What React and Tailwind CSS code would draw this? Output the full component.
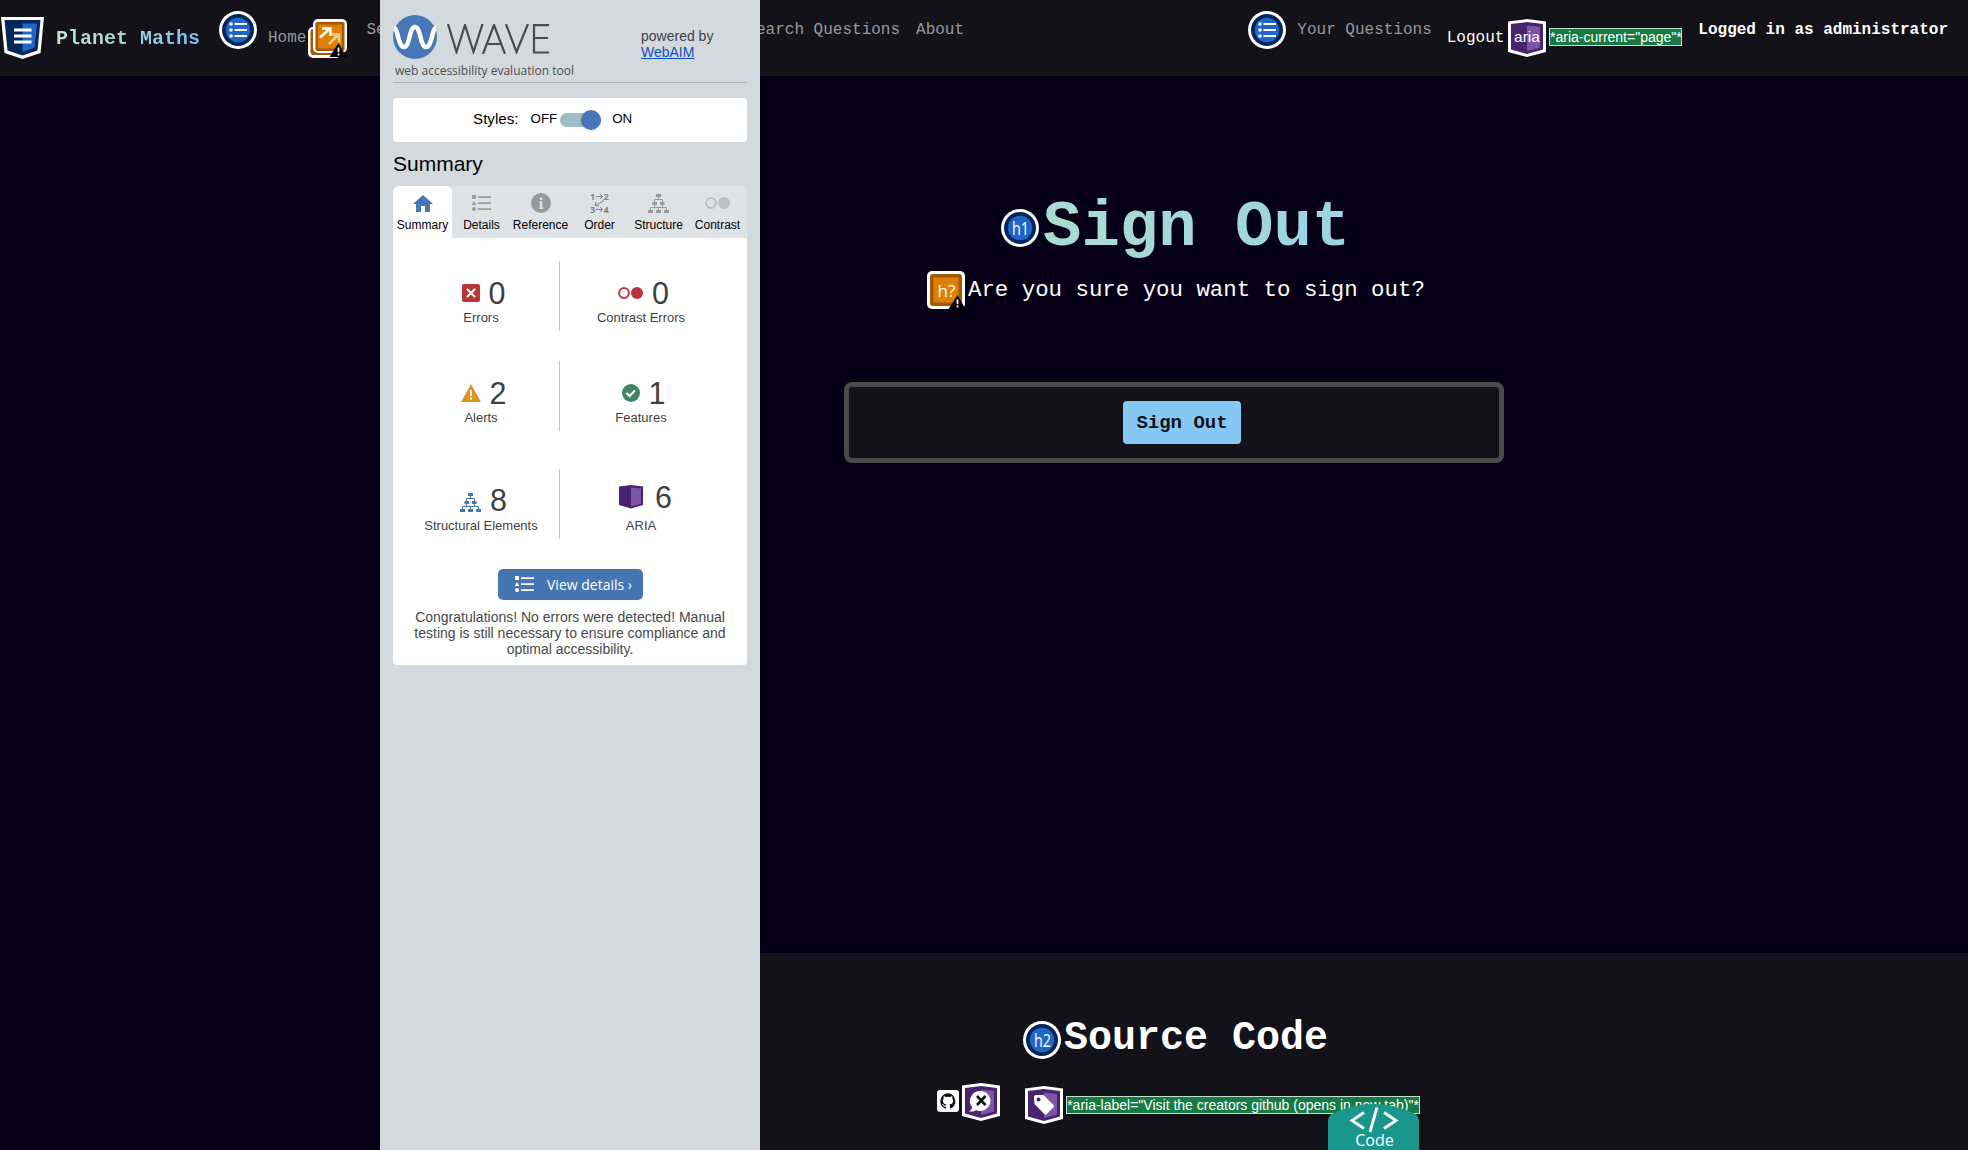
const mono = "font-['Liberation_Mono',monospace]";
const sans = "font-['Liberation_Sans',Arial,sans-serif]";

const Hex = ({ children, className = "" }) => (
  <svg viewBox="0 0 38 38" className={"h-[38px] w-[38px] shrink-0 " + className}>
    <path d="M0 2.500 19 0l19 2.500V33L19 38 0 33z" fill="#fff" />
    <path d="M3 5 19 3l16 2v25.500L19 35 3 30.500z" fill="#472370" />
    <path d="M19 6.500l13 1.500v20.500L19 32z" fill="#7d55a6" />
    {children}
  </svg>
);

const Circle = ({ label }) => (
  <svg viewBox="0 0 38 38" className="h-[38px] w-[38px] shrink-0">
    <circle cx="19" cy="19" r="19" fill="#fff" />
    <circle cx="19" cy="19" r="16" fill="#04275a" />
    <circle cx="19" cy="19" r="12.200" fill="#1f66c8" />
    {label ? (
      <text x="19.500" y="26" textAnchor="middle" fontSize="18" fill="#fff" className="font-['Open_Sans',sans-serif]" textLength="17" lengthAdjust="spacingAndGlyphs">{label}</text>
    ) : (
      <g fill="#fff">
        <circle cx="12" cy="13" r="1.800" /><circle cx="12" cy="19" r="1.800" /><circle cx="12" cy="25" r="1.800" />
        <path d="M15.500 12h12.500v2H15.500zM15.500 18h12.500v2H15.500zM15.500 24h12.500v2H15.500z" />
      </g>
    )}
  </svg>
);

const Warn = () => (
  <g>
    <path d="M30.500 24 38.500 38h-17z" fill="#000" />
    <path d="M29.600 28.500h1.800v4.800h-1.800zM29.600 34.500h1.800v2h-1.800z" fill="#fff" />
  </g>
);

const Tree = ({ color }) => (
  <svg viewBox="0 0 21 19" className="h-[19px] w-[21px]" fill={color}>
    <path d="M8 0h5v3H8zM4.500 8h4.500v3H4.500zM12 8h4.500v3H12zM0 16h5v3H0zM8 16h5v3H8zM16 16h5v3h-5z" />
    <path d="M10.500 3v2.500M6.500 8V5.500h8V8M6.500 11v2.500M14.500 11v2.500M2.500 16v-2.500h16V16M10.500 16v-2.500" stroke={color} fill="none" />
  </svg>
);

const ListIcon = ({ color }) => (
  <svg viewBox="0 0 19 16" className="h-4 w-[19px]" fill={color}>
    <path d="M0 0h4v4H0zM2 6l2.300 4H-.3zM6 1.200h13v1.800H6zM6 7.200h13v1.800H6zM6 13.200h13v1.800H6z" />
    <circle cx="2" cy="14" r="2" />
  </svg>
);

const AriaLabel = ({ children, width, className = "" }) => (
  <span className={`box-border flex h-[18px] items-center justify-center whitespace-nowrap border border-[#c5dfcf] bg-[#177a45] text-white ${sans} ${width} ${className}`}>{children}</span>
);

function Navbar() {
  return (
    <header className={`flex h-[76px] items-start bg-[#121218] text-[16px] leading-5 text-[#98989b] ${mono}`}>
      <svg viewBox="0 0 43 43" className="ml-px mt-[16px] h-[43px] w-[43px] shrink-0">
        <path d="M0 1h43l-3.500 36L21.500 43 3.500 37z" fill="#fff" />
        <path d="M3.500 4h36l-3 30.500-15 5-15-5z" fill="#04275a" />
        <path d="M21.500 7.500H36l-2.500 24L21.500 36z" fill="#1f66c8" />
        <path d="M13 12.500h17.500v3H13zM13 18.500h17.500v3H13zM13 24.500h17.500v3H13z" fill="#fff" />
      </svg>
      <b className="ml-[12px] mt-[27px] w-[145px] shrink-0 whitespace-nowrap bg-gradient-to-r from-[#c3e6c6] to-[#7fb9ee] bg-clip-text text-[20px] leading-6 text-transparent">Planet Maths</b>
      <div className="ml-[18px] mt-[11px]"><Circle /></div>
      <span className="ml-[11px] mt-[28px]">Home</span>
      <svg viewBox="0 0 39 39" className="ml-[2px] mt-[19px] h-[39px] w-[39px] shrink-0">
        <rect x="0" y="8" width="33" height="31" rx="5" fill="#fff" />
        <rect x="2.500" y="10" width="28" height="26" rx="3" fill="#a35a04" />
        <rect x="5" y="0" width="34" height="34" rx="5" fill="#fff" />
        <rect x="7.500" y="3" width="29" height="29" rx="2" fill="#a35a04" />
        <rect x="10" y="5.500" width="24" height="24" fill="#e07f06" />
        <path d="M21 25l9-9M23.500 15.500h7.500v8" stroke="#f6cb92" strokeWidth="2.500" fill="none" />
        <path d="M12 18.500l9-8M14 9.500h8.500V17" stroke="#fff" strokeWidth="2.500" fill="none" />
        <Warn />
      </svg>
      <span className="ml-[19px] mt-5 w-[20px] shrink-0 overflow-hidden whitespace-nowrap">Se</span>
      <span className="ml-[360px] mt-5 shrink-0 whitespace-nowrap">Search Questions</span>
      <span className="ml-[16px] mt-5">About</span>
      <div className="ml-auto mt-[11px]"><Circle /></div>
      <span className="ml-[11px] mt-5 whitespace-nowrap">Your Questions</span>
      <span className="ml-[15px] mt-[28px] text-white">Logout</span>
      <Hex className="ml-[4px] mt-[19px]">
        <text x="19" y="23" textAnchor="middle" fontSize="15" fill="#fff" textLength="26" lengthAdjust="spacingAndGlyphs" className={sans}>aria</text>
      </Hex>
      <AriaLabel width="w-[133px]" className="ml-[3px] mt-[28px] text-[14px]">*aria-current="page"*</AriaLabel>
      <b className="ml-[16px] mr-[20px] mt-5 whitespace-nowrap text-white">Logged in as administrator</b>
    </header>
  );
}

const ContrastIcon = ({ color, className }) => (
  <svg viewBox="0 0 25 12" className={className}>
    <circle cx="6" cy="6" r="4.900" fill="none" stroke={color} strokeWidth="2" />
    <circle cx="19" cy="6" r="6" fill={color} />
  </svg>
);

const tabs = [
  ["Summary", <svg viewBox="0 0 20 17" className="h-[17px] w-5" fill="#4675b4"><path d="M10 0 20 9h-3v8h-5v-6H8v6H3V9H0z" /></svg>],
  ["Details", <ListIcon color="#9a9c9f" />],
  ["Reference", <svg viewBox="0 0 20 20" className="h-5 w-5"><circle cx="10" cy="10" r="10" fill="#97999c" /><path d="M8.900 4.500h2.400v2.400H8.900zM8.200 8.500h3.100v6h1V16H8v-1.500h1V10h-.8z" fill="#e0e4e7" /></svg>],
  ["Order", <svg viewBox="0 0 20 20" className="h-5 w-5 overflow-visible" fill="#818386"><g fontSize="9" fontWeight="bold" className="font-['Noto_Sans',sans-serif]"><text x="0" y="6.500">1</text><text x="13.500" y="6.500">2</text><text x="0" y="20">3</text><text x="13.500" y="20">4</text></g><path d="M5.500 3.500h7M10 1l2.500 2.500L10 6M5.500 16.500h7M10 14l2.500 2.500L10 19M14 7.500 5.500 12.500M6 8.800l-1 3.800 4 .4" stroke="#818386" strokeWidth="1" fill="none" /></svg>],
  ["Structure", <Tree color="#999b9e" />],
  ["Contrast", <ContrastIcon color="#bdc0c3" className="h-3 w-[25px]" />],
];

const Stat = ({ icon, n, label, gap = "gap-[9px]" }) => (
  <div className="flex flex-col items-center text-[#3f3f41]">
    <div className={"flex h-[30px] items-center pl-[5px] " + gap}>{icon}<span className="text-[30.500px] leading-[30px]">{n}</span></div>
    <span className="mt-[2px] whitespace-nowrap text-[13px] leading-4">{label}</span>
  </div>
);

const StatRow = ({ left, right, className = "" }) => (
  <div className={"flex h-[70px] " + className}>
    <div className="flex w-[167px] justify-center border-r border-[#c3c4c6] pl-[10px] pt-[17px]">{left}</div>
    <div className="flex flex-1 justify-center pr-[25px] pt-[17px]">{right}</div>
  </div>
);

function WavePanel() {
  return (
    <aside className={`absolute left-[380px] top-0 flex h-full w-[380px] flex-col bg-[#d4d9dd] px-[13px] ${sans}`}>
      <div className="flex h-[83px] border-b border-[#adb2ba]">
        <div className="w-[248px] pt-[15px]">
          <div className="flex">
            <svg viewBox="0 0 44 44" className="h-[44px] w-[44px]">
              <circle cx="22" cy="22" r="22" fill="#4678b8" />
              <path d="M1 13c4 0 4 19 10 19s5-20 11-20 5 20 11 20 6-19 10-19" fill="none" stroke="#fff" strokeWidth="4.500" />
            </svg>
            <svg viewBox="0 0 103 30" className="ml-[10px] mt-[9px] h-[30px] w-[103px]" fill="none" stroke="#4b4c50" strokeWidth="2.200">
              <path d="M1 0l8.500 28L18 1l8.500 27L35.500 0M36 30 47 1l11 29M40 20h14M59 0l10.500 28L81 0M102 1.200H87V28.500h15M87 14h14" />
            </svg>
          </div>
          <div className="ml-[2px] whitespace-nowrap font-['Open_Sans',sans-serif] text-[12px] leading-[23px] text-[#4d4e52]">web accessibility evaluation tool</div>
        </div>
        <div className="pt-[28px] text-[14px] leading-4 text-[#3f4043]">powered by<br /><a className="text-[#0e51c2] underline">WebAIM</a></div>
      </div>
      <div className="mt-[15px] flex h-[44px] shrink-0 items-center rounded bg-white pl-[80px] text-black">
        <span className="pb-[2px] text-[15.200px]">Styles:</span>
        <span className="ml-[12px] pb-[3px] text-[13.300px]">OFF</span>
        <span className="ml-[3px] flex h-[14px] w-[41px] items-center justify-end rounded-full bg-[#9bbfc3]"><span className="h-5 w-5 rounded-full bg-[#4675b8] shadow" /></span>
        <span className="ml-[11px] pb-[3px] text-[13.300px]">ON</span>
      </div>
      <h2 className="mt-[10px] text-[21px] leading-6 text-black">Summary</h2>
      <div className="mt-[10px] flex h-[52px] shrink-0 overflow-hidden rounded-t-md bg-[#dfe3e6]">
        {tabs.map(([name, icon], i) => (
          <div key={name} className={"flex w-[59px] flex-col items-center " + (i === 0 ? "rounded-tr-md bg-white" : "")}>
            <div className="flex h-[34px] items-center justify-center"><div>{icon}</div></div>
            <span className="-mt-[3px] whitespace-nowrap text-[12px] leading-4 text-black">{name}</span>
          </div>
        ))}
      </div>
      <section className="h-[427px] shrink-0 rounded-b bg-white pt-[23px]">
        <StatRow
          left={<Stat n="0" label="Errors" icon={<svg viewBox="0 0 18 18" className="h-[18px] w-[18px]"><rect width="18" height="18" rx="2" fill="#b7363c" /><path d="M5 5l8 8M13 5l-8 8" stroke="#fff" strokeWidth="2" /></svg>} />}
          right={<Stat n="0" label="Contrast Errors" icon={<ContrastIcon color="#bd3339" className="h-3 w-[25px]" />} />}
        />
        <StatRow className="mt-[30px]"
          left={<Stat n="2" label="Alerts" icon={<svg viewBox="0 0 20 18" className="h-[18px] w-5"><path d="M10 0l10 18H0z" fill="#e29221" /><path d="M9 6h2v6H9zM9 13.500h2v2H9z" fill="#fff" /></svg>} />}
          right={<Stat n="1" label="Features" icon={<svg viewBox="0 0 18 18" className="h-[18px] w-[18px]"><circle cx="9" cy="9" r="9" fill="#438469" /><path d="M4.500 9l3 3L13 6.500" stroke="#fff" strokeWidth="2" fill="none" /></svg>} />}
        />
        <StatRow className="mt-[38px]"
          left={<div className="-mt-px"><Stat n="8" label={<span className="relative top-px">Structural Elements</span>} icon={<div className="mt-[4px]"><Tree color="#4675b4" /></div>} /></div>}
          right={<div className="-mt-[4px]"><Stat gap="gap-[12px] ml-1" n="6" label={<span className="relative top-[4px]">ARIA</span>} icon={<svg viewBox="0 0 24 24" className="h-6 w-6"><path d="M0 1.500 12 0l12 1.500V20L12 23.500 0 20z" fill="#472370" /><path d="M12 2.500l10 1V19l-10 2.500z" fill="#7d55a6" /></svg>} /></div>}
        />
        <button className="ml-[105px] mt-[30px] flex h-[31px] w-[145px] items-center rounded-[5px] bg-[#4675b4] pb-px pl-[17px] font-['Open_Sans',sans-serif] text-[14px] text-white">
          <ListIcon color="#fff" /><span className="ml-[13px] whitespace-nowrap">View details ›</span>
        </button>
        <p className="mt-[9px] text-center text-[14px] leading-4 text-[#47484b]">Congratulations! No errors were detected! Manual<br />testing is still necessary to ensure compliance and<br />optimal accessibility.</p>
      </section>
    </aside>
  );
}

export default function App() {
  return (
    <div className={`relative flex h-[1150px] w-[1968px] flex-col overflow-hidden bg-[#050015] ${mono}`}>
      <Navbar />
      <main className="ml-[380px] flex h-[877px] flex-col items-center pt-[112px]">
        <div className="flex h-[75px] w-[346px] items-start">
          <div className="mt-[21px]"><Circle label="h1" /></div>
          <h1 className="ml-[4px] mt-[2px] whitespace-nowrap bg-gradient-to-r from-[#aaddcf] to-[#9bd3e3] bg-clip-text text-[64px] font-bold leading-[76px] text-transparent">Sign Out</h1>
        </div>
        <div className="mt-[8px] flex w-[494px] items-center">
          <svg viewBox="0 0 38 38" className="h-[38px] w-[38px] shrink-0">
            <rect width="38" height="38" rx="5" fill="#fff" />
            <rect x="3" y="3" width="32" height="32" rx="3" fill="#a35a04" />
            <rect x="6.500" y="6.500" width="25" height="25" fill="#e07f06" />
            <text x="19.500" y="25.500" textAnchor="middle" fontSize="17" fill="#fff" className="font-['Open_Sans',sans-serif]" textLength="18" lengthAdjust="spacingAndGlyphs">h?</text>
            <Warn />
          </svg>
          <p className="ml-[3px] whitespace-nowrap text-[22.400px] leading-7 text-white">Are you sure you want to sign out?</p>
        </div>
        <section className="mt-[73px] flex h-[81px] w-[660px] items-center justify-center rounded-lg border-[5px] border-[#4a4a4a] bg-[#121218] pl-[16px]">
          <button className="h-[43px] w-[118px] rounded bg-[#87c7f3] pt-[2px] text-[19px] font-bold text-[#121218]">Sign Out</button>
        </section>
      </main>
      <footer className="ml-[380px] h-[197px] bg-[#121218] pl-[557px] pt-[67px] text-white">
        <div className="flex h-[40px] items-center pl-[86px]">
          <Circle label="h2" />
          <h2 className="-mt-[3px] ml-[3px] whitespace-nowrap text-[40px] font-bold leading-[44px]">Source Code</h2>
        </div>
        <div className="mt-[23px] flex items-start">
          <svg viewBox="0 0 22 22" className="mt-[7px] h-[22px] w-[22px]">
            <rect width="22" height="22" rx="3" fill="#fff" />
            <path transform="translate(3 3)" d="M8 .2a8 8 0 0 0-2.500 15.500c.4.100.5-.2.500-.4v-1.500c-2 .4-2.600-.9-2.700-1.200-.1-.2-.5-.9-.8-1.100-.3-.1-.7-.5 0-.5.600 0 1.100.6 1.200.8.700 1.200 1.900.9 2.300.7.100-.5.300-.9.500-1.100-1.800-.2-3.600-.9-3.600-3.900 0-.9.300-1.600.8-2.100-.1-.2-.4-1 .1-2.100 0 0 .7-.2 2.200.8a7.500 7.500 0 0 1 4 0c1.500-1 2.200-.8 2.200-.8.400 1.100.2 1.900.1 2.100.5.600.8 1.300.8 2.100 0 3.100-1.900 3.700-3.700 3.900.3.300.6.700.6 1.500v2.200c0 .2.100.500.500.400A8 8 0 0 0 8 .2z" fill="#121218" />
          </svg>
          <Hex className="ml-[3px]">
            <path d="M19 8a10.500 10 0 1 1-5 19.200c-2 1.300-4.500 1.600-7 1 2-1 3-2.500 3.200-4A10.500 10 0 0 1 19 8z" fill="#fff" />
            <path d="M15 13l8.500 9M23.500 13 15 22" stroke="#121212" strokeWidth="2.600" />
          </Hex>
          <Hex className="ml-[25px] mt-[3px]">
            <path d="M9 11q0-2 2-2h7.500l10 10q1 1.200 0 2.300l-7 7q-1 .7-2 0L9.500 18z" fill="#fff" />
            <circle cx="13.500" cy="13.500" r="2" fill="#472370" />
          </Hex>
          <AriaLabel width="w-[354px]" className="ml-[3px] mt-[13px] text-[14px]">*aria-label="Visit the creators github (opens in new tab)"*</AriaLabel>
        </div>
      </footer>
      <WavePanel />
      <svg viewBox="0 0 91 46" className="absolute left-[1328px] top-[1104px] h-[46px] w-[91px]">
        <path d="M0 18q0-7 6-9Q46-9 85 9q6 2 6 9v28H0z" fill="#1a978c" />
        <path d="M36 8.500 24 16.500l12 8M56 8.500l12 8-12 8M49 3.500 42 28" stroke="#fff" strokeWidth="2.800" fill="none" />
        <text x="46.500" y="42" textAnchor="middle" fontSize="16" fill="#fff" className="font-['Open_Sans',sans-serif]">Code</text>
      </svg>
    </div>
  );
}
